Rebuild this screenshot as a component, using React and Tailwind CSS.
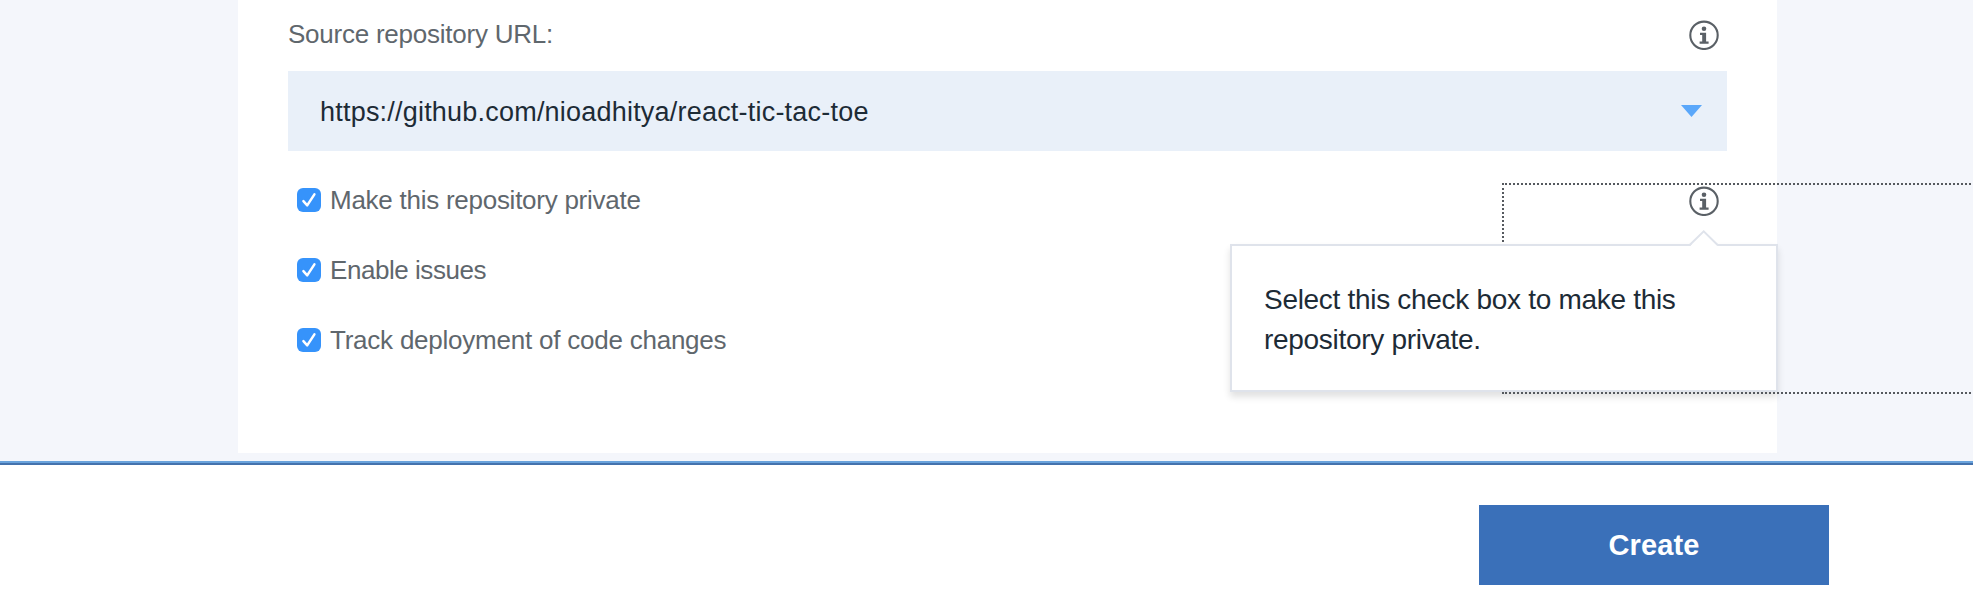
const options = [
  { label: 'Make this repository private', tracking: 'tracking-[-0.26px]', info: true },
  { label: 'Enable issues', tracking: 'tracking-[-0.45px]' },
  { label: 'Track deployment of code changes', tracking: 'tracking-[-0.23px]' },
];

function InfoIcon() {
  return (
    <svg className="block h-[30px] w-[30px] shrink-0" viewBox="0 0 30 30" fill="none">
      <circle cx="15" cy="15.3" r="13.7" stroke="#5a6066" strokeWidth="2.1" />
      <circle cx="15" cy="8.8" r="2.3" fill="#5a6066" />
      <path d="M11 12.8H17.1V21.6H19.6V23.8H10.6V21.6H13.2V15H11Z" fill="#5a6066" />
    </svg>
  );
}

function Checkbox() {
  return (
    <span className="flex h-6 w-6 shrink-0 items-center justify-center rounded-[6px] bg-[#3693fb]">
      <svg className="block h-6 w-6" viewBox="0 0 24 24" fill="none">
        <path d="M6.4 13.2L10.2 17.4L17.4 6.4" stroke="#fff" strokeWidth="2.5" strokeLinecap="round" strokeLinejoin="round" />
      </svg>
    </span>
  );
}

function Tooltip() {
  return (
    <div className="absolute left-[992px] top-[244px] h-[148px] w-[548px] border-2 border-[#dfe3eb] bg-white px-8 pt-[34px] text-[28px] leading-[40px] text-[#1d2b36] shadow-[0_5px_7px_rgba(0,0,0,0.12)]">
      <svg className="absolute left-[456px] top-[-16px] block h-4 w-[32px]" viewBox="0 0 32 16" fill="none">
        <path d="M2.2 16L15.7 1.6L29.8 16Z" fill="#fff" />
        <path d="M1.4 15.2L15.7 1.4L29.9 15.2" stroke="#dfe3eb" strokeWidth="2" />
      </svg>
      <p className="whitespace-nowrap tracking-[-0.3px]">Select this check box to make this</p>
      <p className="whitespace-nowrap tracking-[-0.3px]">repository private.</p>
    </div>
  );
}

export default function App() {
  return (
    <div className="flex h-[604px] w-[1973px] flex-col overflow-hidden bg-white font-['Liberation_Sans',Arial,sans-serif]">
      <main className="h-[461px] bg-[#f4f6fb] pl-[238px]">
        <section className="relative h-[453px] w-[1539px] bg-white px-[50px]">
          <div className="flex h-[71px] items-start justify-between pr-2 pt-5">
            <label className="-mt-px text-[26px] leading-[30px] tracking-[-0.24px] text-[#5f676d]">Source repository URL:</label>
            <InfoIcon />
          </div>
          <div className="flex h-20 items-center justify-between bg-[#e9f0f9] pl-8 pr-[25px]">
            <span className="mt-0.5 text-[27px] leading-[30px] tracking-[0.21px] text-[#1d2b36]">https://github.com/nioadhitya/react-tic-tac-toe</span>
            <svg className="block h-3 w-[21px]" viewBox="0 0 21 12">
              <path d="M0 0H21L10.5 12Z" fill="#5aa7fa" />
            </svg>
          </div>
          <div className="flex flex-col pl-[9px] pr-2 pt-[34px]">
            {options.map((o) => (
              <div key={o.label} className="flex h-[70px] items-start">
                <div className="flex h-[30px] w-full items-center">
                  <Checkbox />
                  <span className={'ml-[9px] flex-1 text-[26px] leading-[30px] text-[#5f676d] ' + o.tracking}>{o.label}</span>
                  {o.info && <div className="mt-0.5"><InfoIcon /></div>}
                </div>
              </div>
            ))}
          </div>
          <div className="absolute left-[1264px] top-[183px] h-[211px] w-[480px] border-2 border-dotted border-[#55595e]" />
          <Tooltip />
          <div className="absolute left-[1264px] top-[392px] w-[480px] border-t-2 border-dotted border-[#55595e]" />
        </section>
      </main>
      <div className="h-0.5 bg-[#6aa3dc]" />
      <footer className="flex flex-1 items-start justify-end border-t-2 border-[#4472ad] pr-[144px] pt-10">
        <button className="h-20 w-[350px] bg-[#3a70b9] pt-0.5 text-[29px] font-bold tracking-[0.1px] text-white">Create</button>
      </footer>
    </div>
  );
}
